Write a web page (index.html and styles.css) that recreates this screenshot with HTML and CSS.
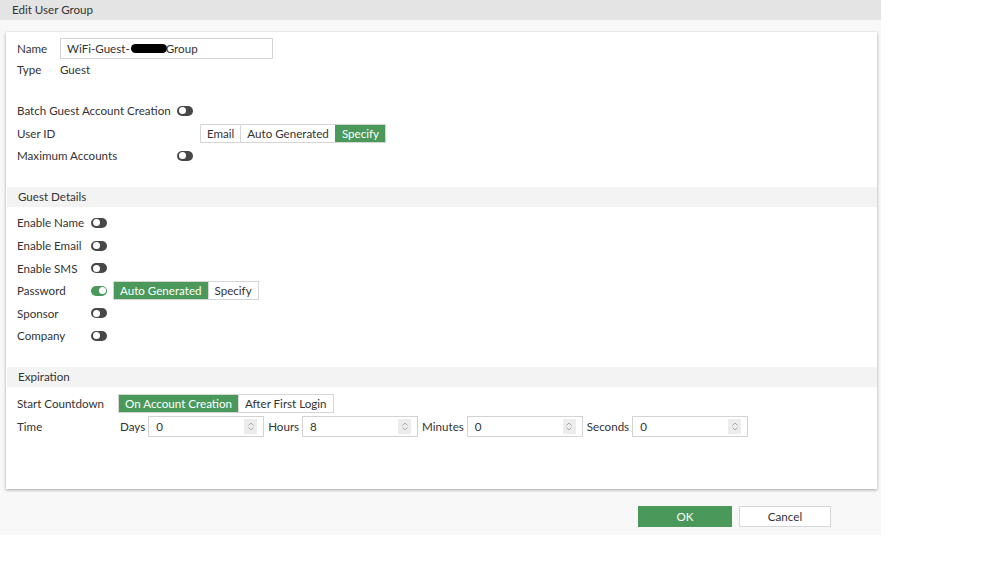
FILE: index.html
```html
<!DOCTYPE html>
<html>
<head>
<meta charset="utf-8">
<link rel="stylesheet" href="styles.css">
</head>
<body>
<div class="app">
  <div class="titlebar">Edit User Group</div>
  <div class="card">
    <div class="group top">
      <div class="row first">
        <span class="label w-name">Name</span>
        <div class="input name-input">WiFi-Guest-<span class="redact"></span>Group</div>
      </div>
      <div class="row">
        <span class="label w-name">Type</span>
        <span class="value">Guest</span>
      </div>
      <div class="row spaced">
        <span class="label w-batch">Batch Guest Account Creation</span>
        <span class="toggle"></span>
      </div>
      <div class="row">
        <span class="label w-userid">User ID</span>
        <div class="btngroup">
          <span class="btn">Email</span><span class="btn">Auto Generated</span><span class="btn on">Specify</span>
        </div>
      </div>
      <div class="row">
        <span class="label w-batch">Maximum Accounts</span>
        <span class="toggle"></span>
      </div>
    </div>

    <div class="section">Guest Details</div>
    <div class="group details">
      <div class="row r2"><span class="label w-det">Enable Name</span><span class="toggle"></span></div>
      <div class="row r2"><span class="label w-det">Enable Email</span><span class="toggle"></span></div>
      <div class="row r2"><span class="label w-det">Enable SMS</span><span class="toggle"></span></div>
      <div class="row r2"><span class="label w-det">Password</span><span class="toggle is-on"></span>
        <div class="btngroup gap"><span class="btn on">Auto Generated</span><span class="btn">Specify</span></div>
      </div>
      <div class="row r2"><span class="label w-det">Sponsor</span><span class="toggle"></span></div>
      <div class="row r2"><span class="label w-det">Company</span><span class="toggle"></span></div>
    </div>

    <div class="section">Expiration</div>
    <div class="group expiry">
      <div class="row r3">
        <span class="label w-exp">Start Countdown</span>
        <div class="btngroup"><span class="btn on">On Account Creation</span><span class="btn">After First Login</span></div>
      </div>
      <div class="row r3">
        <span class="label w-time">Time</span>
        <span class="unit">Days</span>
        <div class="input num">0<span class="spin"><svg width="8" height="11" viewBox="0 0 8 11"><path d="M1.5 4.5 L4 2 L6.5 4.5 M1.5 6.5 L4 9 L6.5 6.5" fill="none" stroke="#a9a9a9" stroke-width="1"/></svg></span></div>
        <span class="unit">Hours</span>
        <div class="input num">8<span class="spin"><svg width="8" height="11" viewBox="0 0 8 11"><path d="M1.5 4.5 L4 2 L6.5 4.5 M1.5 6.5 L4 9 L6.5 6.5" fill="none" stroke="#a9a9a9" stroke-width="1"/></svg></span></div>
        <span class="unit">Minutes</span>
        <div class="input num">0<span class="spin"><svg width="8" height="11" viewBox="0 0 8 11"><path d="M1.5 4.5 L4 2 L6.5 4.5 M1.5 6.5 L4 9 L6.5 6.5" fill="none" stroke="#a9a9a9" stroke-width="1"/></svg></span></div>
        <span class="unit">Seconds</span>
        <div class="input num">0<span class="spin"><svg width="8" height="11" viewBox="0 0 8 11"><path d="M1.5 4.5 L4 2 L6.5 4.5 M1.5 6.5 L4 9 L6.5 6.5" fill="none" stroke="#a9a9a9" stroke-width="1"/></svg></span></div>
      </div>
    </div>
  </div>
  <div class="footer">
    <span class="fbtn ok">OK</span>
    <span class="fbtn cancel">Cancel</span>
  </div>
</div>
</body>
</html>
```

FILE: styles.css
```css
* { box-sizing: border-box; }
html, body { margin: 0; padding: 0; background: #fff; }
body {
  font-family: Lato, "Liberation Sans", sans-serif;
  font-size: 11.6px;
  color: #333;
}
.app {
  width: 881px;
  height: 535px;
  background: #f8f8f8;
  display: flex;
  flex-direction: column;
}
.titlebar {
  height: 20px;
  line-height: 20px;
  background: #e4e4e4;
  padding-left: 12px;
  color: #333;
}
.card {
  margin: 12px 4px 0 6px;
  height: 457px;
  background: #fff;
  box-shadow: 0 1px 3px rgba(0,0,0,0.35);
  display: flex;
  flex-direction: column;
}
.group { padding-left: 11px; display: flex; flex-direction: column; }
.group.top { padding-top: 6px; padding-bottom: 20px; }
.group.details { padding-top: 4.7px; padding-bottom: 20px; }
.group.expiry { padding-top: 5px; }
.row {
  height: 22.4px;
  display: flex;
  align-items: center;
}
.row.first { height: 20.4px; }
.row.spaced { margin-top: 19px; }
.row.r2 { height: 22.6px; }
.row.r3 { height: 22.6px; }
.label { flex: none; }
.w-name { width: 43px; }
.w-batch { width: 160px; }
.w-userid { width: 183px; }
.w-det { width: 74px; }
.w-exp { width: 101px; }
.w-time { width: 99px; }

.section {
  height: 20px;
  line-height: 20px;
  background: #f3f3f3;
  padding-left: 11px;
  margin-left: 1px;
}

.input {
  height: 21px;
  border: 1px solid #d3d3d3;
  padding-left: 6px;
  display: flex;
  align-items: center;
  background: #fff;
}
.name-input { width: 213px; }
.redact {
  display: inline-block;
  width: 36px;
  height: 9px;
  background: #000;
  border-radius: 5px;
  margin: 0 -1px 0 1px;
}
.num {
  width: 116px;
  position: relative;
  padding-left: 7px;
}
.spin {
  position: absolute;
  right: 6px;
  top: 2px;
  width: 13px;
  height: 15px;
  background: #ececec;
  display: flex;
  align-items: center;
  justify-content: center;
}
.unit { margin: 0 3px 0 4px; }
.unit:first-of-type { margin-left: 0; }

.toggle {
  flex: none;
  width: 16px;
  height: 10px;
  border-radius: 5px;
  background: #474747;
  position: relative;
}
.toggle::after {
  content: "";
  position: absolute;
  left: 1.5px;
  top: 1.5px;
  width: 7px;
  height: 7px;
  border-radius: 50%;
  background: #fff;
}
.toggle.is-on { background: #4a995b; }
.toggle.is-on::after { left: 7.5px; }

.btngroup {
  display: flex;
  height: 19px;
  border: 1px solid #d6d6d6;
}
.btngroup.gap { margin-left: 6px; }
.btn {
  padding: 0 6px;
  line-height: 17px;
  border-left: 1px solid #d6d6d6;
  background: #fff;
}
.btn:first-child { border-left: none; }
.btn.on { background: #4a995b; color: #fff; border-color: #4a995b; }

.footer {
  display: flex;
  padding: 17px 0 0 638px;
  gap: 7px;
}
.fbtn {
  height: 21px;
  line-height: 19px;
  text-align: center;
  border: 1px solid #d6d6d6;
}
.ok { width: 94px; background: #4a995b; color: #fff; border-color: #4a995b; }
.cancel { width: 92px; background: #fff; }
```
